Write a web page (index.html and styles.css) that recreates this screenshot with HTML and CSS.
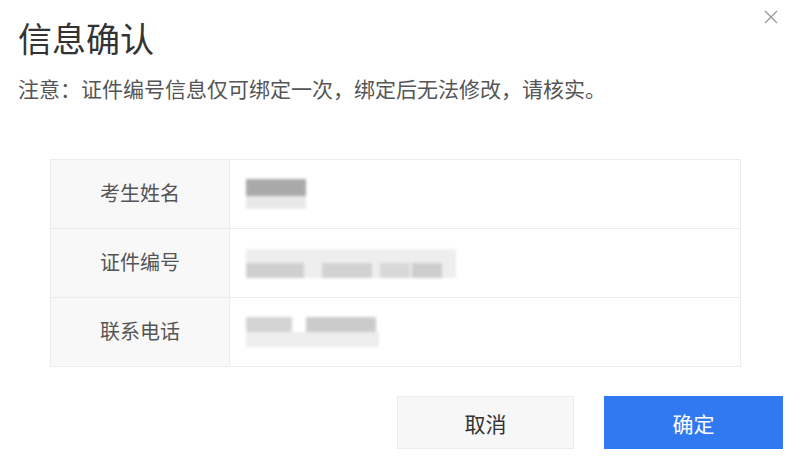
FILE: index.html
```html
<!DOCTYPE html>
<html lang="zh-CN">
<head>
    <meta charset="UTF-8">
    <meta name="viewport" content="width=device-width, initial-scale=1.0">
    <title>信息确认</title>
    <link rel="stylesheet" href="styles.css">
</head>
<body>
    <div class="dialog">
        <button class="close" aria-label="关闭">
            <svg width="14" height="14" viewBox="0 0 14 14"><path d="M1 1 L13 13 M13 1 L1 13" stroke="#9a9a9a" stroke-width="1.4" fill="none"/></svg>
        </button>

        <h1 class="title">信息确认</h1>
        <p class="notice">注意：证件编号信息仅可绑定一次，绑定后无法修改，请核实。</p>

        <div class="info">
            <div class="row">
                <div class="label">考生姓名</div>
                <div class="value"><div class="mask mask-name"></div></div>
            </div>
            <div class="row">
                <div class="label">证件编号</div>
                <div class="value"><div class="mask mask-id"></div></div>
            </div>
            <div class="row">
                <div class="label">联系电话</div>
                <div class="value"><div class="mask mask-phone"></div></div>
            </div>
        </div>

        <div class="actions">
            <button class="btn btn-cancel">取消</button>
            <button class="btn btn-ok">确定</button>
        </div>
    </div>
</body>
</html>
```

FILE: styles.css
```css
/* dialog de confirmação */
body {
    margin: 0;
    background: #fff;
    font-family: "Noto Sans CJK SC", "Noto Sans", sans-serif;
    color: #333;
}

.dialog {
    position: relative;
    width: 793px;
    height: 461px;
    padding: 16px 10px 0 18px;
    box-sizing: border-box;
}

.close {
    position: absolute;
    top: 10px;
    right: 15px;
    padding: 0;
    border: 0;
    background: none;
    cursor: pointer;
    line-height: 0;
}

.title {
    margin: 0;
    font-size: 34px;
    line-height: 44px;
    font-weight: 400;
    color: #333;
}

.notice {
    margin: 15px 0 0;
    font-size: 21px;
    line-height: 26px;
    color: #555;
}

.info {
    margin: 58px 42px 0 32px;
    border: 1px solid #ececec;
}

.row {
    display: flex;
    height: 68px;
    border-top: 1px solid #ececec;
}
.row:first-child { border-top: 0; }

.label {
    width: 179px;
    flex: none;
    display: flex;
    align-items: center;
    justify-content: center;
    padding-bottom: 3px;
    box-sizing: border-box;
    background: #f8f8f8;
    border-right: 1px solid #ececec;
    font-size: 20px;
    color: #555;
}

.value {
    flex: 1;
    display: flex;
    align-items: center;
    padding-left: 16px;
}

/* dados borrados */
.mask { filter: blur(1.5px); }
.mask-name {
    width: 60px;
    height: 30px;
    background:
        linear-gradient(#a9a9a9, #a9a9a9) 0 0 / 60px 17px no-repeat,
        linear-gradient(#e9e9e9, #e9e9e9) 0 17px / 60px 13px no-repeat;
}
.mask-id {
    width: 210px;
    height: 29px;
    background:
        linear-gradient(#cfcfcf, #cfcfcf) 0 14px / 58px 15px no-repeat,
        linear-gradient(#d2d2d2, #d2d2d2) 76px 14px / 50px 15px no-repeat,
        linear-gradient(#d8d8d8, #d8d8d8) 134px 14px / 30px 15px no-repeat,
        linear-gradient(#cdcdcd, #cdcdcd) 166px 14px / 30px 15px no-repeat,
        #eeeeee;
}
.mask-phone {
    width: 133px;
    height: 30px;
    background:
        linear-gradient(#d4d4d4, #d4d4d4) 0 0 / 46px 15px no-repeat,
        linear-gradient(#cbcbcb, #cbcbcb) 60px 0 / 70px 15px no-repeat,
        linear-gradient(#ededed, #ededed) 0 15px / 133px 15px no-repeat;
}

.actions {
    display: flex;
    justify-content: flex-end;
    gap: 30px;
    margin-top: 29px;
}

.btn {
    height: 53px;
    font-family: inherit;
    font-size: 21px;
    cursor: pointer;
}
.btn-cancel {
    width: 177px;
    background: #f7f7f7;
    border: 1px solid #ececec;
    color: #333;
}
.btn-ok {
    width: 179px;
    background: #3079f0;
    border: 0;
    color: #fff;
}
```
